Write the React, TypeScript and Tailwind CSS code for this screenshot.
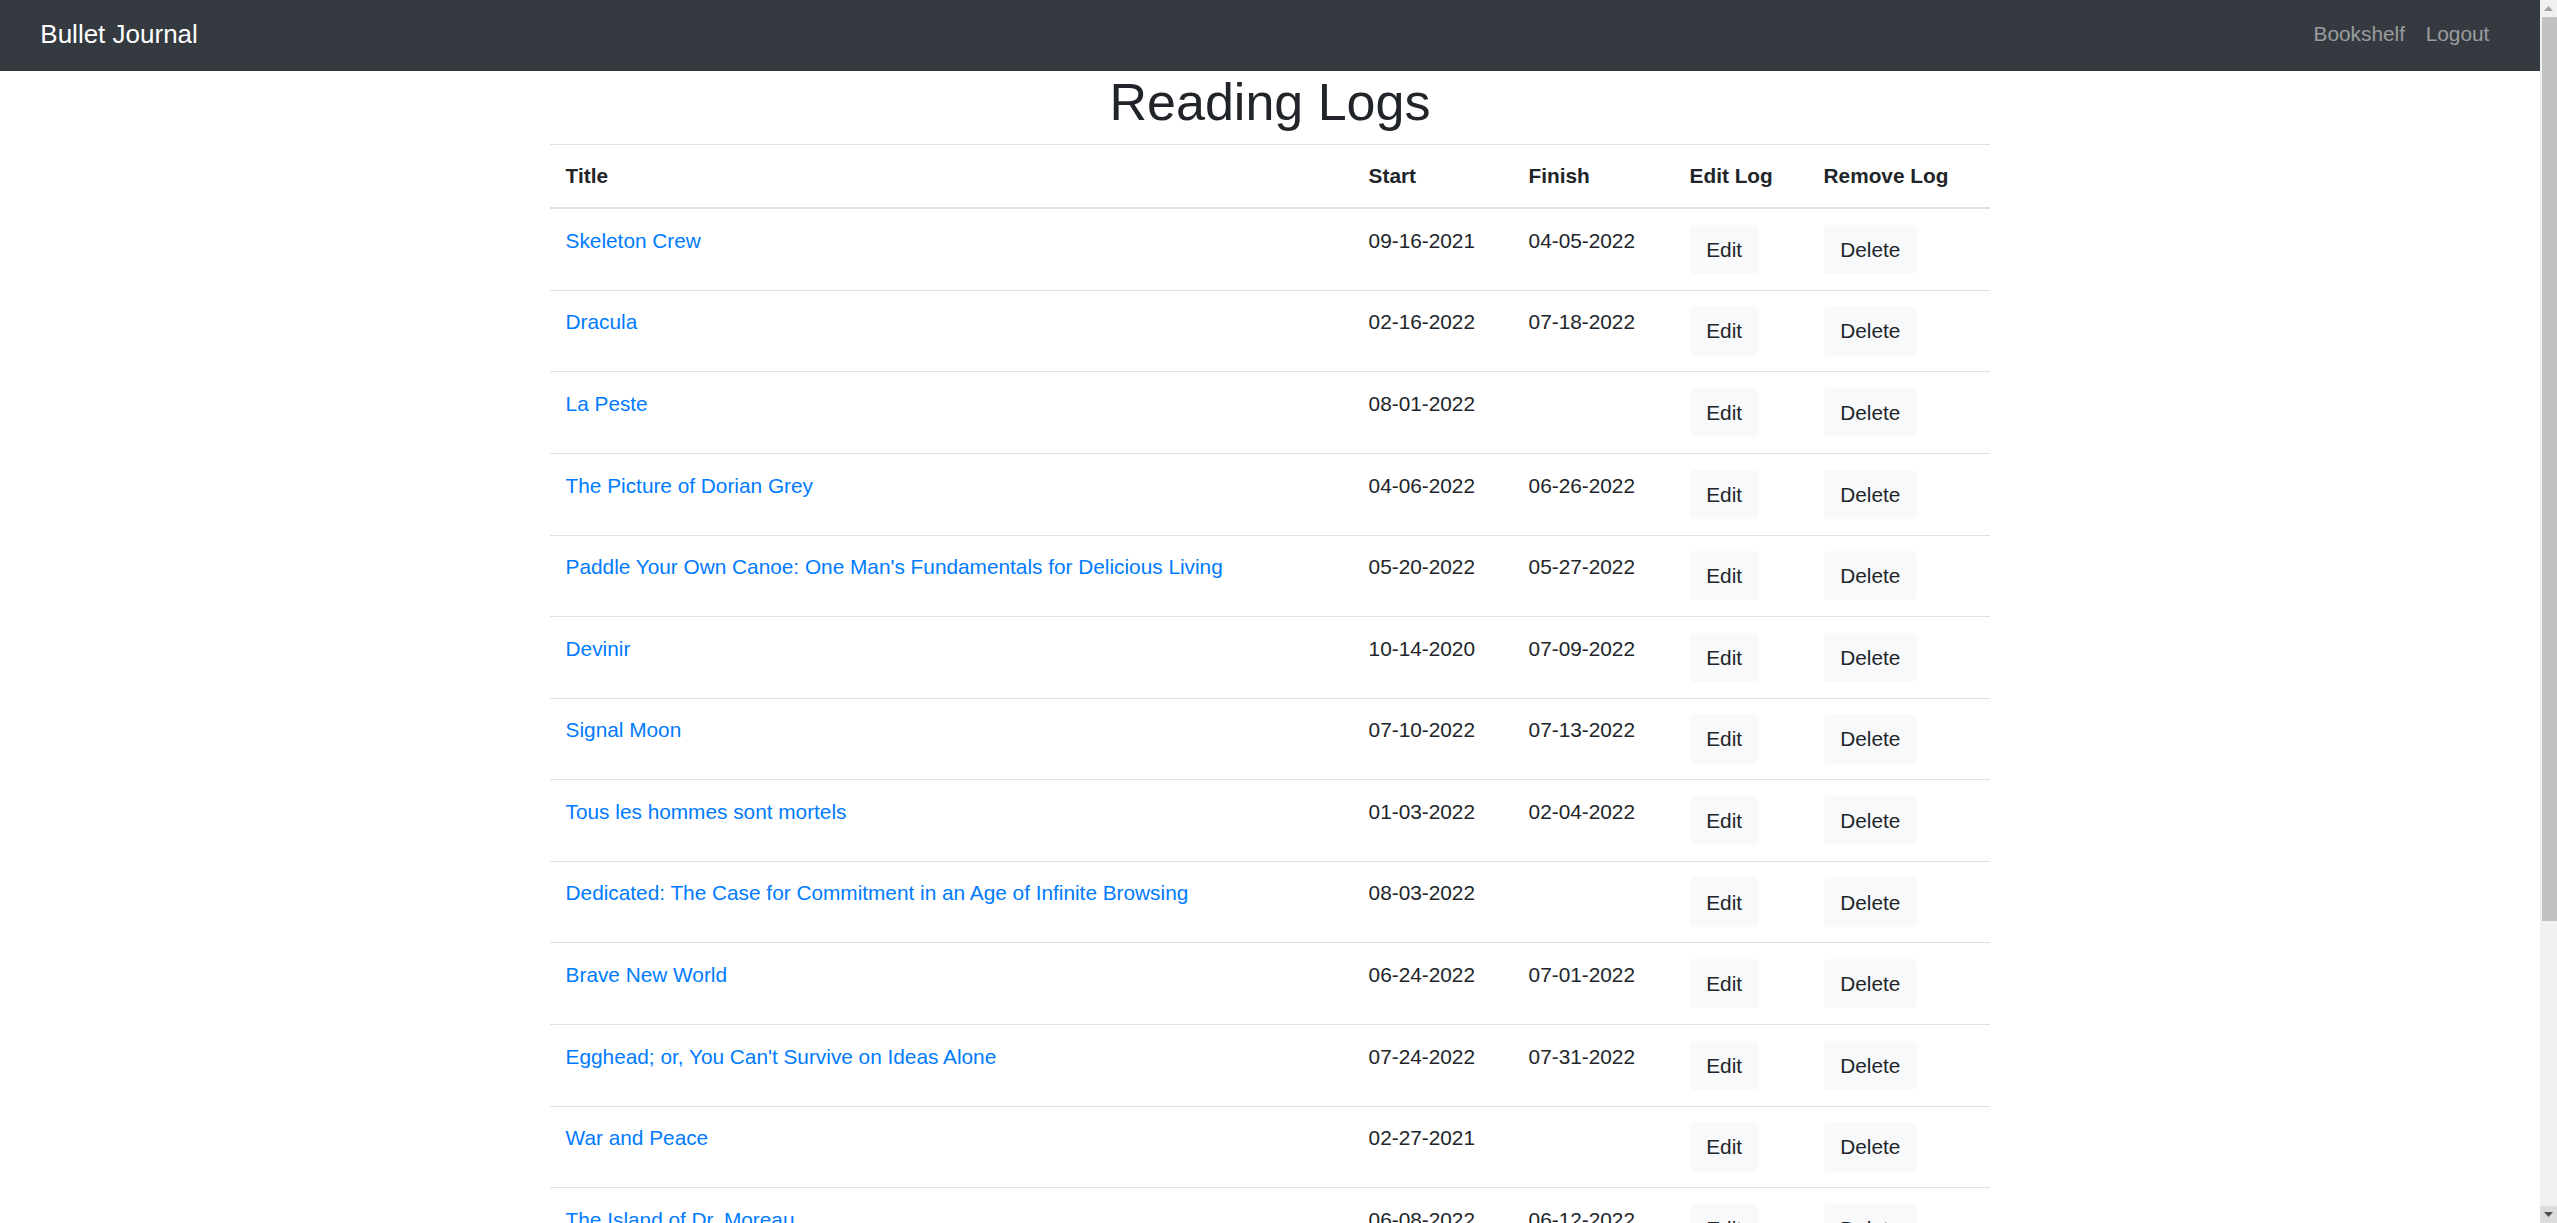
import React from "react";

type Log = { title: string; start: string; finish: string };

const logs: Log[] = [
  { title: "Skeleton Crew", start: "09-16-2021", finish: "04-05-2022" },
  { title: "Dracula", start: "02-16-2022", finish: "07-18-2022" },
  { title: "La Peste", start: "08-01-2022", finish: "" },
  { title: "The Picture of Dorian Grey", start: "04-06-2022", finish: "06-26-2022" },
  {
    title: "Paddle Your Own Canoe: One Man's Fundamentals for Delicious Living",
    start: "05-20-2022",
    finish: "05-27-2022",
  },
  { title: "Devinir", start: "10-14-2020", finish: "07-09-2022" },
  { title: "Signal Moon", start: "07-10-2022", finish: "07-13-2022" },
  { title: "Tous les hommes sont mortels", start: "01-03-2022", finish: "02-04-2022" },
  {
    title: "Dedicated: The Case for Commitment in an Age of Infinite Browsing",
    start: "08-03-2022",
    finish: "",
  },
  { title: "Brave New World", start: "06-24-2022", finish: "07-01-2022" },
  {
    title: "Egghead; or, You Can't Survive on Ideas Alone",
    start: "07-24-2022",
    finish: "07-31-2022",
  },
  { title: "War and Peace", start: "02-27-2021", finish: "" },
  { title: "The Island of Dr. Moreau", start: "06-08-2022", finish: "06-12-2022" },
  { title: "The Stranger", start: "08-05-2022", finish: "08-09-2022" },
  { title: "Frankenstein", start: "08-10-2022", finish: "" },
  { title: "Nausea", start: "03-12-2021", finish: "04-01-2021" },
  { title: "The Second Sex", start: "05-02-2021", finish: "" },
];

function Scrollbar() {
  return (
    <div className="flex h-full w-[17px] shrink-0 flex-col bg-[#f1f1f1]">
      <div className="flex h-[17px] items-center justify-center">
        <svg width="9" height="5" viewBox="0 0 9 5">
          <path d="M0 5 L4.5 0 L9 5 Z" fill="#a3a3a3" />
        </svg>
      </div>
      <div className="flex flex-1 flex-col">
        <div className="ml-[2px] h-[904px] bg-[#c1c1c1]" />
      </div>
      <div className="flex h-[17px] items-center justify-center bg-[#dcdcdc]">
        <svg width="9" height="5" viewBox="0 0 9 5">
          <path d="M0 0 L9 0 L4.5 5 Z" fill="#505050" />
        </svg>
      </div>
    </div>
  );
}

export default function App() {
  return (
    <div
      className="flex h-screen overflow-hidden bg-white text-[#212529] text-[20.8px] leading-[1.5]"
      style={{ fontFamily: '"Liberation Sans", Arial, sans-serif' }}
    >
      <div className="min-w-0 flex-1">
        <nav className="flex h-[71px] items-center justify-between bg-[#343a40] px-[40.3px] pb-[3px]">
          <a href="#" className="text-[26px] leading-[39px] text-white">
            Bullet Journal
          </a>
          <div className="flex items-center">
            <a href="#" className="px-[10.4px] leading-[31.2px] text-white/50">
              Bookshelf
            </a>
            <a href="#" className="px-[10.4px] leading-[31.2px] text-white/50">
              Logout
            </a>
          </div>
        </nav>

        <div className="mx-auto w-[1440px]">
          <h1 className="mb-[10.4px] text-center text-[52px] font-normal leading-[62.4px]">
            Reading Logs
          </h1>
          <table className="w-[1440px] table-fixed border-collapse">
            <colgroup>
              <col className="w-[803px]" />
              <col className="w-[160px]" />
              <col className="w-[161px]" />
              <col className="w-[134px]" />
              <col className="w-[182px]" />
            </colgroup>
            <thead>
              <tr>
                {["Title", "Start", "Finish", "Edit Log", "Remove Log"].map((h) => (
                  <th
                    key={h}
                    className="border-t border-b-2 border-[#dee2e6] p-[15.6px] text-left align-bottom font-bold leading-[31.2px]"
                  >
                    {h}
                  </th>
                ))}
              </tr>
            </thead>
            <tbody>
              {logs.map((log) => (
                <tr key={log.title}>
                  <td className="border-t border-[#dee2e6] p-[15.6px] align-top leading-[31.2px]">
                    <a href="#" className="text-[#007bff]">
                      {log.title}
                    </a>
                  </td>
                  <td className="border-t border-[#dee2e6] p-[15.6px] align-top leading-[31.2px]">
                    {log.start}
                  </td>
                  <td className="border-t border-[#dee2e6] p-[15.6px] align-top leading-[31.2px]">
                    {log.finish}
                  </td>
                  <td className="border-t border-[#dee2e6] p-[15.6px] align-top">
                    <button className="rounded-[5.2px] border border-[#f8f9fa] bg-[#f8f9fa] px-[15.6px] py-[8.1px] leading-[31.2px] text-[#212529]">
                      Edit
                    </button>
                  </td>
                  <td className="border-t border-[#dee2e6] p-[15.6px] align-top">
                    <button className="rounded-[5.2px] border border-[#f8f9fa] bg-[#f8f9fa] px-[15.6px] py-[8.1px] leading-[31.2px] text-[#212529]">
                      Delete
                    </button>
                  </td>
                </tr>
              ))}
            </tbody>
          </table>
        </div>
      </div>
      <Scrollbar />
    </div>
  );
}
